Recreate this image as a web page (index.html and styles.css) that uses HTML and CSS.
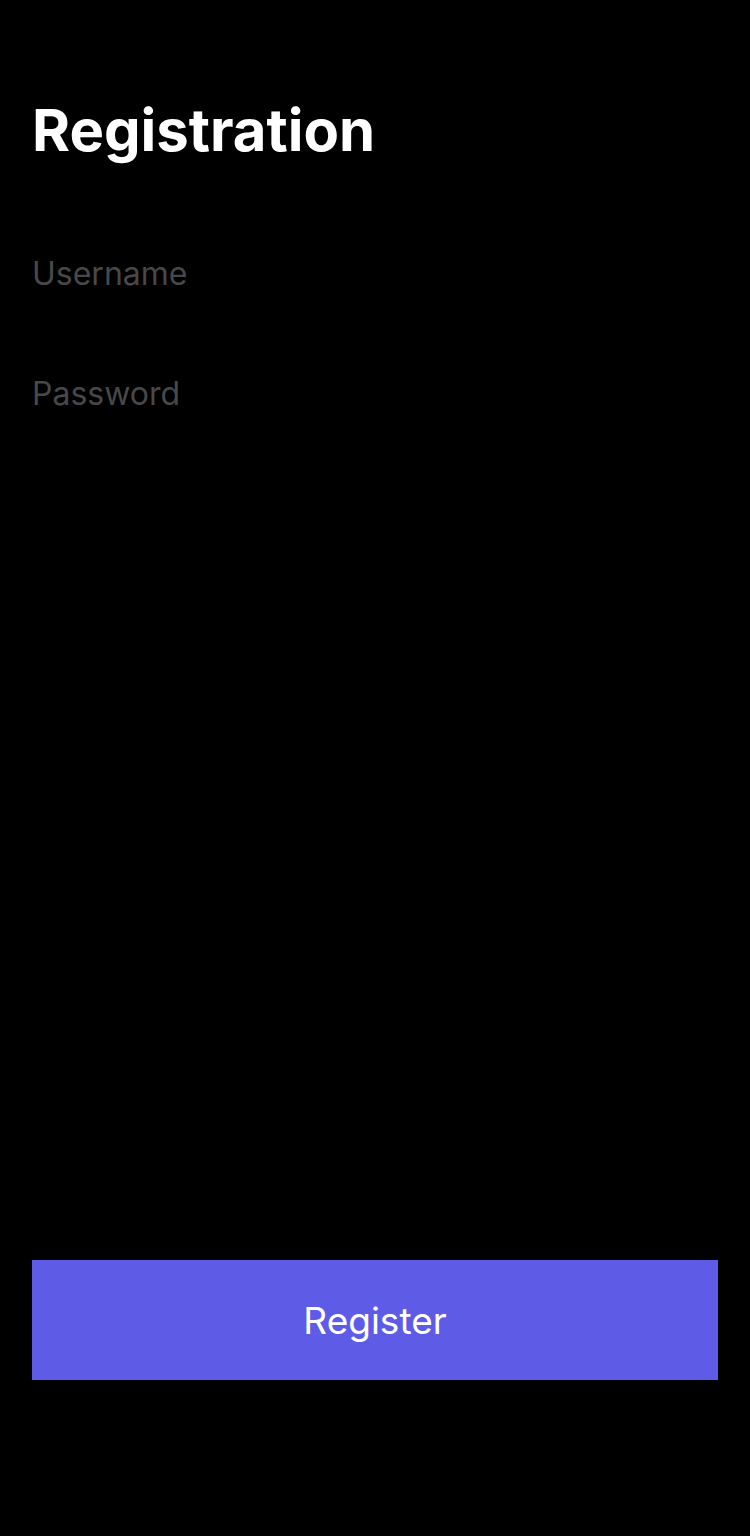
FILE: index.html
```html
<!DOCTYPE html>
<html lang="en">
<head>
<meta charset="utf-8">
<title>Registration</title>
<link rel="stylesheet" href="styles.css">
</head>
<body>
<main class="screen">
  <h1 class="title">Registration</h1>
  <form class="form">
    <input class="field" type="text" placeholder="Username">
    <input class="field" type="password" placeholder="Password">
  </form>
  <div class="spacer"></div>
  <button class="register" type="button">Register</button>
</main>
</body>
</html>
```
FILE: styles.css
```css
* { box-sizing: border-box; }
html, body {
  margin: 0;
  padding: 0;
  background: #000;
  height: 100%;
}
body {
  font-family: Inter, "Noto Sans", "Liberation Sans", sans-serif;
  color: #fff;
}
.screen {
  display: flex;
  flex-direction: column;
  height: 1536px;
  padding: 96px 32px 156px;
}
.title {
  margin: 0;
  font-size: 58px;
  font-weight: 700;
  line-height: 68px;
  letter-spacing: 0;
}
.form {
  display: flex;
  flex-direction: column;
  gap: 40px;
  margin-top: 69px;
}
.field {
  background: transparent;
  border: none;
  outline: none;
  padding: 0;
  height: 80px;
  font-family: inherit;
  font-size: 32px;
  color: #fff;
  width: 100%;
}
.field::placeholder { color: #48484a; }
.spacer { flex: 1; }
.register {
  height: 120px;
  width: 100%;
  border: none;
  background: #5e5ce6;
  color: #fff;
  font-family: inherit;
  font-size: 37px;
  font-weight: 400;
  padding: 0;
}
```
